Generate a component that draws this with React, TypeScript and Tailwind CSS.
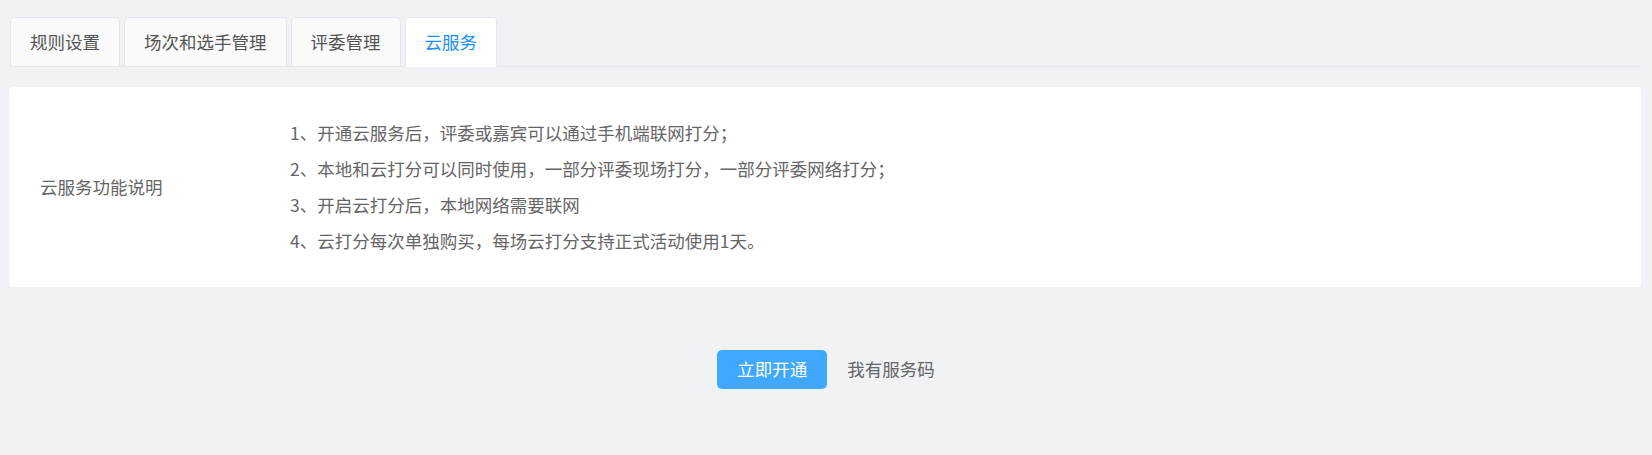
import { useState } from "react";

const tabs = ["规则设置", "场次和选手管理", "评委管理", "云服务"];

const notes = [
  "1、开通云服务后，评委或嘉宾可以通过手机端联网打分；",
  "2、本地和云打分可以同时使用，一部分评委现场打分，一部分评委网络打分；",
  "3、开启云打分后，本地网络需要联网",
  "4、云打分每次单独购买，每场云打分支持正式活动使用1天。",
];

export default function App() {
  const [active, setActive] = useState(3);

  return (
    <div className="min-h-screen bg-[#f0f2f5] pl-[9px] pr-[11px] pt-[17px] font-['Microsoft_YaHei','Noto_Sans_CJK_SC',sans-serif] text-[17.5px] text-[#606266]">
      {/* tabs */}
      <div className="flex gap-[4px] border-b border-[#e4e7ed] pl-px">
        {tabs.map((t, i) => (
          <button
            key={t}
            onClick={() => setActive(i)}
            className={
              i === active
                ? "-mb-px flex h-[50px] items-center rounded-t-[4px] border border-[#e4e7ed] border-b-white bg-white px-[19px] text-[#1890ff]"
                : "-mb-px flex h-[50px] items-center rounded-t-[4px] border border-[#e4e7ed] bg-[#fafafa] px-[19px] text-[#555]"
            }
          >
            {t}
          </button>
        ))}
      </div>

      {/* 说明 */}
      <div className="mt-[20px] flex h-[200px] items-center rounded-[4px] bg-white">
        <div className="w-[281px] shrink-0 pl-[31px] text-[#666]">云服务功能说明</div>
        <ul className="leading-[36px] text-[#666]">
          {notes.map((n) => (
            <li key={n}>{n}</li>
          ))}
        </ul>
      </div>

      <div className="mt-[63px] flex items-center justify-center gap-[20px] pl-[2px]">
        <button className="h-[39px] rounded-[5px] bg-[#40a9ff] px-5 text-white">立即开通</button>
        <button className="text-[#666]">我有服务码</button>
      </div>
    </div>
  );
}
